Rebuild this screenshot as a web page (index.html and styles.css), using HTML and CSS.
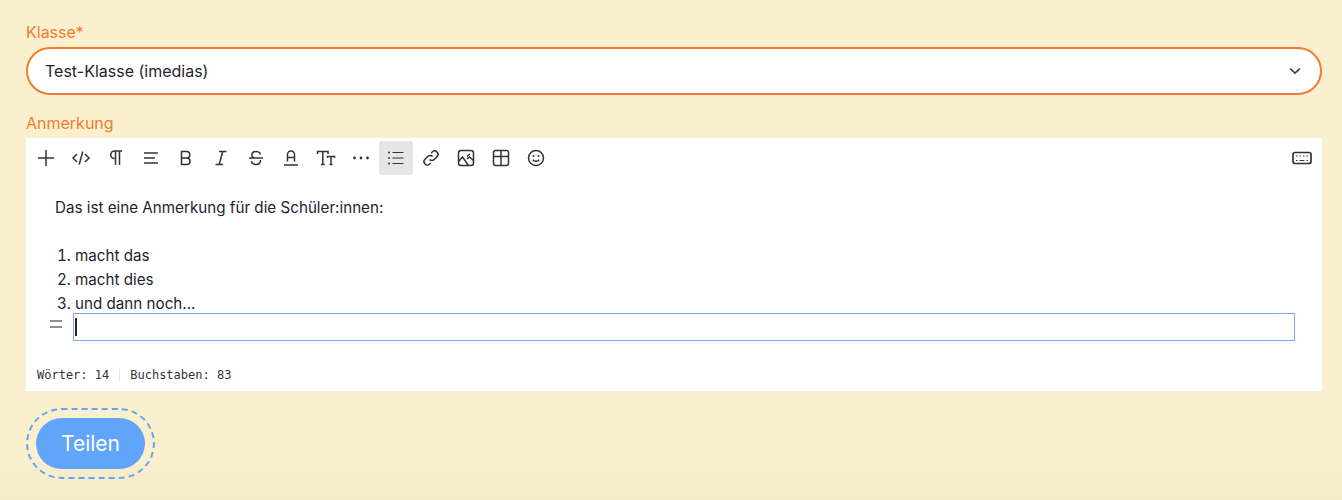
FILE: index.html
```html
<!DOCTYPE html>
<html lang="de">

<head>
    <meta charset="UTF-8">
    <title>Teilen</title>
    <link rel="stylesheet" href="styles.css">
</head>

<body>
    <form class="share-form">
        <label class="field-label">Klasse*</label>
        <div class="select-box">
            <span>Test-Klasse (imedias)</span>
            <svg class="chevron" viewBox="0 0 12 8"><path d="M1.200 1.600 6 6.200l4.800-4.600"/></svg>
        </div>

        <label class="field-label label-note">Anmerkung</label>
        <div class="editor">
            <div class="toolbar">
                <span class="tool"><svg viewBox="0 0 20 20"><path d="M10 2v16M2 10h16"/></svg></span>
                <span class="tool"><svg viewBox="0 0 20 20"><path d="M6 6 2 10l4 4M14 6l4 4-4 4M11.800 3.500l-3.600 13"/></svg></span>
                <span class="tool"><svg viewBox="0 0 20 20"><path d="M8.500 10.500a3.700 3.700 0 0 1 0-7.500H16M9.500 3v14M13.500 3v14"/></svg></span>
                <span class="tool"><svg viewBox="0 0 20 20"><path d="M3 5h14M3 10h11M3 15h14"/></svg></span>
                <span class="tool"><svg viewBox="0 0 20 20"><path d="M5.500 3.500h5a3.200 3.200 0 0 1 0 6.500h-5zM5.500 10h5.800a3.300 3.300 0 0 1 0 6.500H5.500z"/></svg></span>
                <span class="tool"><svg viewBox="0 0 20 20"><path d="M8 3.500h7.500M4.500 16.500H12M11.800 3.500l-3.600 13"/></svg></span>
                <span class="tool"><svg viewBox="0 0 20 20"><path d="M14.500 6.500C14 4.500 12.200 3.500 10 3.500 7.500 3.500 5.800 4.800 5.800 7c0 1.300.8 2.200 2.200 3M3 10h14M14.500 12c.2 3-1.800 4.500-4.500 4.500-2.500 0-4.200-1.200-4.700-3.200"/></svg></span>
                <span class="tool"><svg viewBox="0 0 20 20"><path d="M6.500 13.500V6.500a3.500 3.500 0 0 1 7 0v7M6.500 9.500h7M3 17h14"/></svg></span>
                <span class="tool"><svg viewBox="0 0 20 20"><path d="M1.500 6V3.500h10.500V6M6.800 3.500v13M5 16.500h3.600M11.500 10V8.500h7V10M15 8.500v8M13.500 16.500h3"/></svg></span>
                <span class="tool"><svg viewBox="0 0 20 20"><circle class="dot" cx="3.500" cy="10" r="1.400"/><circle class="dot" cx="10" cy="10" r="1.400"/><circle class="dot" cx="16.500" cy="10" r="1.400"/></svg></span>
                <span class="tool tool-active"><svg viewBox="0 0 20 20"><path class="thin" d="M6.500 4.500H17.500M6.500 10H17.500M6.500 15.500H17.500"/><circle class="dot" cx="3" cy="4.500" r="1"/><circle class="dot" cx="3" cy="10" r="1"/><circle class="dot" cx="3" cy="15.500" r="1"/></svg></span>
                <span class="tool"><svg viewBox="0 0 20 20"><path d="M8.500 11.500a3.300 3.300 0 0 0 4.700 0l2.800-2.800a3.300 3.300 0 0 0-4.700-4.700l-1 1M11.500 8.500a3.300 3.300 0 0 0-4.700 0L4 11.300A3.300 3.300 0 0 0 8.700 16l1-1"/></svg></span>
                <span class="tool"><svg viewBox="0 0 20 20"><rect x="2.500" y="2.500" width="15" height="15" rx="2.500"/><path d="m2.500 13.500 4-4.500 6 8.500M11 8.500c1-1.500 2-2.200 3-2.200M11 11l2.500-2 4 3.500"/></svg></span>
                <span class="tool"><svg viewBox="0 0 20 20"><rect x="2.500" y="2.500" width="15" height="15" rx="2"/><path d="M2.500 8.500h15M10 2.500v15"/></svg></span>
                <span class="tool"><svg viewBox="0 0 20 20"><circle cx="10" cy="10" r="7.500"/><path d="M6.800 11.800c1.500 2 4.900 2 6.400 0"/><circle class="dot" cx="7.500" cy="8" r="1"/><circle class="dot" cx="12.500" cy="8" r="1"/></svg></span>
                <span class="tool tool-right"><svg class="keyboard" viewBox="0 0 20 14"><rect x="1" y="1.500" width="18" height="11" rx="2"/><path class="thin" d="M4 5h1.500M7.500 5H9M11 5h1.500M14.500 5H16M4 9.500h1.500M7.500 9.500h5M14.500 9.500H16"/></svg></span>
            </div>

            <div class="editor-body">
                <p class="note-line">Das ist eine Anmerkung für die Schüler:innen:</p>
                <p class="note-line">&nbsp;</p>
                <ol class="note-list">
                    <li>macht das</li>
                    <li>macht dies</li>
                    <li>und dann noch...</li>
                </ol>
                <div class="block-row">
                    <svg class="handle" viewBox="0 0 12 8"><path d="M0 1h12M0 7h12"/></svg>
                    <div class="block-input"><span class="caret"></span></div>
                </div>
            </div>

            <div class="statusbar">
                <span>Wörter: 14</span>
                <span class="status-sep"></span>
                <span>Buchstaben: 83</span>
            </div>
        </div>

        <div class="submit-row">
            <button type="button" class="share-button">Teilen</button>
        </div>
    </form>
</body>

</html>
```

FILE: styles.css
```css
html,
body {
    height: 100%;
}

body {
    font-family: 'Inter', sans-serif;
    color: #1f2430;
    margin: 0;
    height: 500px;
    overflow: hidden;
    background: linear-gradient(to bottom, #fbf0cd 0, #fbf0cd 460px, #f4e9c8 500px);
}

.share-form {
    padding: 22px 20px 0 26px;
}

.field-label {
    display: block;
    color: #f07c30;
    font-size: 16px;
    line-height: 20px;
}

.label-note {
    margin-top: 18px;
}

.select-box {
    display: flex;
    align-items: center;
    justify-content: space-between;
    box-sizing: border-box;
    height: 48px;
    margin-top: 5px;
    padding: 0 19px 0 17px;
    background-color: #fff;
    border: 2px solid #f07c30;
    border-radius: 24px;
    font-size: 16px;
}

.chevron {
    width: 12px;
    height: 8px;
    fill: none;
    stroke: #374151;
    stroke-width: 1.6;
}

.editor {
    margin-top: 5px;
    background-color: #fff;
    box-shadow: 0 0 0 1px #f3eee0;
}

.toolbar {
    display: flex;
    gap: 1px;
    padding: 3px 3px 0;
    height: 35px;
}

.tool {
    display: flex;
    align-items: center;
    justify-content: center;
    width: 34px;
    height: 34px;
    border-radius: 3px;
}

.tool svg {
    width: 20px;
    height: 20px;
    fill: none;
    stroke: #333;
    stroke-width: 1.5;
}

.tool svg .thin {
    stroke-width: 1.2;
}

.tool svg .dot {
    fill: #333;
    stroke: none;
}

.tool-active {
    background-color: #e6e6e6;
}

.tool-right {
    margin-left: auto;
}

.tool svg.keyboard {
    width: 20px;
    height: 14px;
    stroke-width: 1.7;
}

.editor-body {
    padding: 20px 27px 0 29px;
    font-size: 15.2px;
    line-height: 24px;
}

.note-line {
    margin: 0;
}

.note-list {
    margin: 0;
    padding: 0 0 0 20px;
}

.block-row {
    display: flex;
    align-items: center;
    gap: 11px;
    margin: -3px 0 0 -5px;
}

.handle {
    width: 12px;
    height: 8px;
    margin-top: -6px;
    fill: none;
    stroke: #222;
    stroke-width: 1.2;
}

.block-input {
    flex: 1;
    display: flex;
    align-items: center;
    box-sizing: border-box;
    height: 28px;
    padding-left: 1px;
    border: 1px solid #7baaf0;
}

.caret {
    width: 2px;
    height: 18px;
    background-color: #1f2430;
}

.statusbar {
    display: flex;
    align-items: center;
    height: 50px;
    padding: 18px 0 0 11px;
    box-sizing: border-box;
    font-family: 'DejaVu Sans Mono', monospace;
    font-size: 12px;
    color: #333;
}

.status-sep {
    width: 1px;
    height: 12px;
    margin: 0 10px;
    background-color: #e5e5e5;
}

.submit-row {
    display: inline-block;
    margin-top: 17px;
    padding: 8px;
    border: 2px dashed #60a5fa;
    border-radius: 36px;
}

.share-button {
    display: block;
    width: 109px;
    height: 51px;
    border: none;
    border-radius: 26px;
    background-color: #60a5fa;
    color: #fff;
    font-family: 'Inter', sans-serif;
    font-size: 21px;
    font-weight: 400;
}
```
